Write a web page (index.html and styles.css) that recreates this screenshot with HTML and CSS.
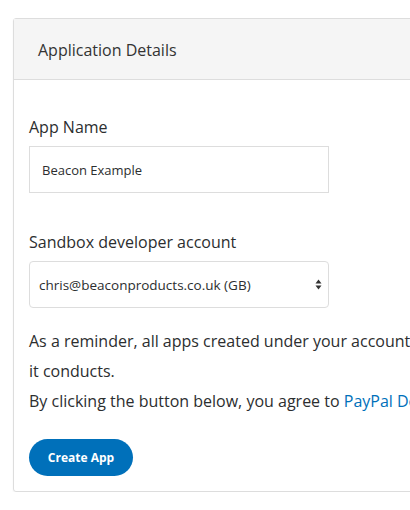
FILE: index.html
```html
<!DOCTYPE html>
<html>
<head>
<meta charset="utf-8">
<link rel="stylesheet" href="styles.css">
</head>
<body>
<div class="card">
  <div class="card-header">Application Details</div>
  <div class="card-body">
    <label class="field-label">App Name</label>
    <div class="text-input">Beacon Example</div>
    <label class="field-label second">Sandbox developer account</label>
    <div class="select">
      <span>chris@beaconproducts.co.uk (GB)</span>
      <svg class="arrows" width="7" height="11" viewBox="0 0 7 11"><path d="M3.5 0.5L6.5 4.5H0.5Z M3.5 10.5L0.5 6.5H6.5Z" fill="#333"/></svg>
    </div>
    <p class="note">As a reminder, all apps created under your account share the same liability for any transactions<br>it conducts.<br>By clicking the button below, you agree to <a class="link">PayPal Developer Agreement</a>.</p>
    <button class="btn">Create App</button>
  </div>
</div>
</body>
</html>
```
FILE: styles.css
```css
html, body { margin: 0; padding: 0; background: #fff; overflow: hidden; }
body { font-family: "Open Sans", "Noto Sans", sans-serif; color: #2c2e2f; }
.card {
  margin: 18px 0 0 13px;
  width: 600px;
  border: 1px solid #ddd;
  border-radius: 3px;
  box-shadow: 0 1px 2px rgba(0,0,0,0.06);
}
.card-header {
  background: #f5f5f5;
  border-bottom: 1px solid #ddd;
  height: 60px;
  line-height: 62px;
  padding-left: 24px;
  font-size: 16px;
  color: #333;
}
.card-body { padding: 35px 15px 15px 15px; }
.field-label { display: block; font-size: 16px; line-height: 24px; color: #2c2e2f; margin-bottom: 7px; }
.field-label.second { margin-top: 37px; }
.text-input {
  width: 300px; height: 47px; box-sizing: border-box;
  border: 1px solid #ddd; padding-left: 12px;
  display: flex; align-items: center; font-size: 13px; color: #2c2e2f;
}
.select {
  width: 300px; height: 47px; box-sizing: border-box;
  border: 1px solid #ddd; border-radius: 4px; padding: 0 6px 0 9px;
  display: flex; align-items: center; justify-content: space-between;
  font-size: 13.5px; color: #2c2e2f;
}
.note { margin: 18px 0 23px; font-size: 16px; line-height: 30px; white-space: nowrap; color: #2c2e2f; }
.link { color: #0070ba; }
.btn {
  display: block; width: 104px; height: 37px; border: none; border-radius: 19px;
  background: #0070ba; color: #fff; font-family: "Open Sans", sans-serif; font-weight: 700; font-size: 12px;
  padding: 0;
}
```
